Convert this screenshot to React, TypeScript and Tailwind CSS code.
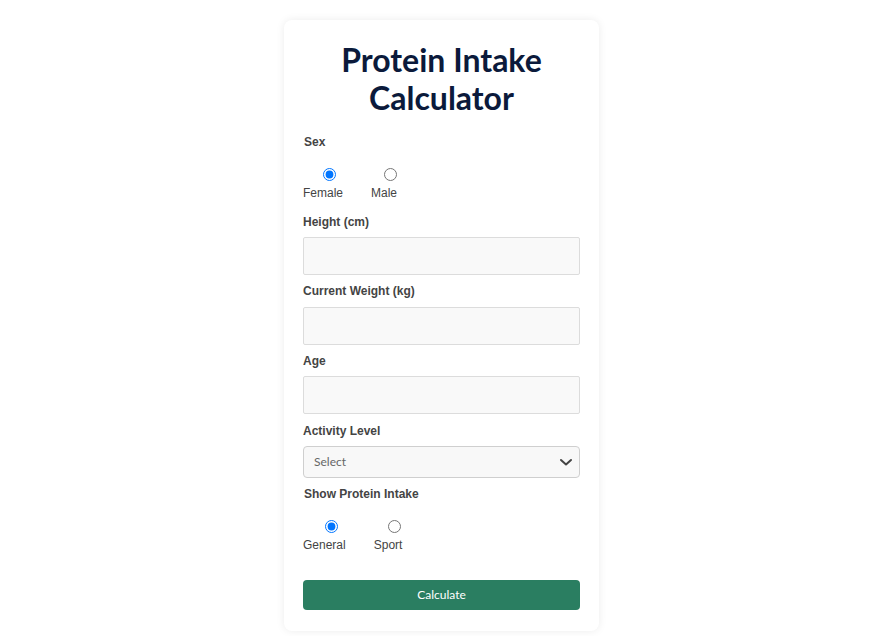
import { useState } from 'react';

const labelCls = "block text-[12px] leading-[14px] font-bold text-[#444] font-['Liberation_Sans',Arial,sans-serif]";
const inputCls = "block w-full h-[38px] bg-[#f9f9f9] border border-[#dcdcdc] rounded-[2px] outline-none";

function RadioOption({
  name,
  value,
  label,
  checked,
  offset,
  onChange,
}: {
  name: string;
  value: string;
  label: string;
  checked: boolean;
  offset: string;
  onChange: (v: string) => void;
}) {
  return (
    <label className="flex flex-col items-start cursor-pointer">
      <input
        type="radio"
        name={name}
        value={value}
        checked={checked}
        onChange={() => onChange(value)}
        className={`w-[13px] h-[13px] accent-[#0075ff] ${offset}`}
      />
      <span className="mt-[5px] text-[12px] leading-[14px] text-[#444] font-['Liberation_Sans',Arial,sans-serif]">{label}</span>
    </label>
  );
}

export default function App() {
  const [sex, setSex] = useState('female');
  const [mode, setMode] = useState('general');

  return (
    <div className="min-h-screen bg-white pt-[20px] pl-[3px]">
      <div className="w-[315px] mx-auto bg-white rounded-[8px] shadow-[0_0_8px_rgba(0,0,0,0.08)] px-[19px] pt-[21px] pb-[21px]">
        <h1 className="text-center text-[32px] leading-[38px] font-bold text-[#0b1a3b] font-['Lato','Open_Sans',sans-serif]">
          Protein Intake Calculator
        </h1>

        <span className={`${labelCls} mt-[18px] ml-[1px]`}>Sex</span>
        <div className="flex gap-[28px] mt-[19px]">
          <RadioOption name="sex" value="female" label="Female" checked={sex === 'female'} offset="ml-[19.5px]" onChange={setSex} />
          <RadioOption name="sex" value="male" label="Male" checked={sex === 'male'} offset="ml-[12.5px]" onChange={setSex} />
        </div>

        <label className={`${labelCls} mt-[15px]`}>Height (cm)</label>
        <input type="number" className={`${inputCls} mt-[8px]`} />

        <label className={`${labelCls} mt-[9px]`}>Current Weight (kg)</label>
        <input type="number" className={`${inputCls} mt-[9px]`} />

        <label className={`${labelCls} mt-[9px]`}>Age</label>
        <input type="number" className={`${inputCls} mt-[8px]`} />

        <label className={`${labelCls} mt-[10px]`}>Activity Level</label>
        <div className="relative mt-[8px]">
          <select className="block w-full h-[32px] appearance-none bg-[#f8f8f8] border border-[#cfcfcf] rounded-[4px] pl-[10px] text-[12px] text-[#666] font-['Lato','Open_Sans',sans-serif] outline-none">
            <option>Select</option>
            <option>Sedentary</option>
            <option>Lightly active</option>
            <option>Moderately active</option>
            <option>Very active</option>
          </select>
          <svg
            className="absolute right-[7px] top-[10px] pointer-events-none"
            width="14"
            height="12"
            viewBox="0 0 14 12"
            fill="none"
          >
            <path d="M2 4l5 4.5L12 4" stroke="#444" strokeWidth="2" strokeLinecap="round" strokeLinejoin="round" />
          </svg>
        </div>

        <span className={`${labelCls} mt-[9px] ml-[1px]`}>Show Protein Intake</span>
        <div className="flex gap-[28px] mt-[19px]">
          <RadioOption name="mode" value="general" label="General" checked={mode === 'general'} offset="ml-[21.5px]" onChange={setMode} />
          <RadioOption name="mode" value="sport" label="Sport" checked={mode === 'sport'} offset="ml-[14px]" onChange={setMode} />
        </div>

        <button className="block w-full h-[30px] mt-[28px] bg-[#2a7e61] rounded-[4px] text-white text-[12px] font-['Lato','Open_Sans',sans-serif]">
          Calculate
        </button>
      </div>
    </div>
  );
}
